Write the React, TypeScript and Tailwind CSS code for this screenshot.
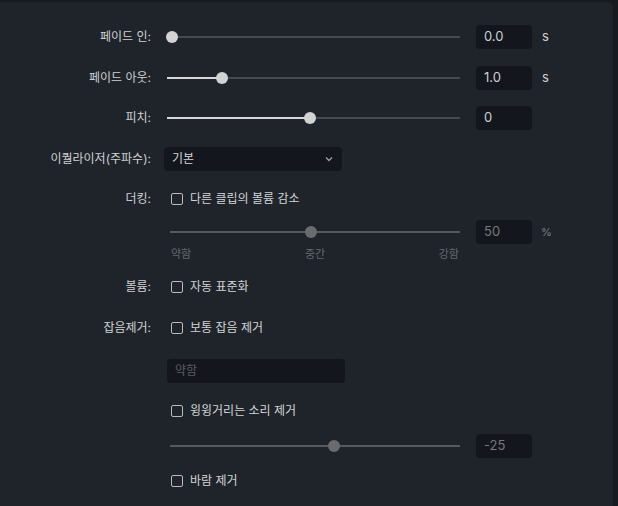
import React from 'react'

const font = { fontFamily: 'Inter, "Noto Sans CJK KR", sans-serif' }

function Label({ children }: { children?: React.ReactNode }) {
    return <div className="w-[151px] shrink-0 text-right text-[12px] text-[#cfd1d3]">{children}</div>
}

function Slider({ width, thumb, fill, disabled }: { width: number; thumb: number; fill?: boolean; disabled?: boolean }) {
    return (
        <div className="relative h-[12px]" style={{ width }}>
            <div className={`absolute left-0 right-0 top-[5px] h-[2px] ${disabled ? 'bg-[#56595d]' : 'bg-[#454a50]'}`} />
            {fill && <div className="absolute left-0 top-[5px] h-[2px] bg-[#d6d6d6]" style={{ width: thumb }} />}
            <div
                className={`absolute top-0 h-[12px] w-[12px] rounded-full ${disabled ? 'bg-[#696b6e]' : 'bg-[#d3d3d3]'}`}
                style={{ left: thumb - 6 }}
            />
        </div>
    )
}

function NumBox({ value, disabled }: { value: string; disabled?: boolean }) {
    return (
        <div
            className={`flex h-[24px] w-[56px] items-center rounded-[4px] bg-[#13171d] pl-[8px] text-[13px] ${
                disabled ? 'text-[#75787c]' : 'text-[#cdd0d3]'
            }`}
        >
            {value}
        </div>
    )
}

function Check({ text }: { text: string }) {
    return (
        <div className="flex items-center gap-[7px] pl-[20px]">
            <div className="h-[12px] w-[12px] rounded-[2px] border border-[#b9bbbd]" />
            <span className="text-[12px] text-[#d2d4d6]">{text}</span>
        </div>
    )
}

export default function App() {
    return (
        <div className="h-[506px] w-[618px] bg-[#171b20] pt-[2px] pr-[5px]" style={font}>
            <div className="h-full rounded-tr-[6px] bg-[#1f242b] pt-[23px]">
                {/* fade in */}
                <div className="flex h-[24px] items-center">
                    <Label>페이드 인:</Label>
                    <div className="ml-[16px]">
                        <Slider width={293} thumb={5} fill />
                    </div>
                    <div className="ml-[16px]"><NumBox value="0.0" /></div>
                    <span className="ml-[10px] text-[13px] text-[#cdd0d3]">s</span>
                </div>

                {/* fade out */}
                <div className="mt-[17px] flex h-[24px] items-center">
                    <Label>페이드 아웃:</Label>
                    <div className="ml-[16px]">
                        <Slider width={293} thumb={55} fill />
                    </div>
                    <div className="ml-[16px]"><NumBox value="1.0" /></div>
                    <span className="ml-[10px] text-[13px] text-[#cdd0d3]">s</span>
                </div>

                {/* pitch */}
                <div className="mt-[16px] flex h-[24px] items-center">
                    <Label>피치:</Label>
                    <div className="ml-[16px]">
                        <Slider width={293} thumb={143} fill />
                    </div>
                    <div className="ml-[16px]"><NumBox value="0" /></div>
                </div>

                {/* equalizer */}
                <div className="mt-[17px] flex h-[24px] items-center">
                    <Label>이퀄라이저(주파수):</Label>
                    <div className="ml-[13px] flex h-[24px] w-[178px] items-center justify-between rounded-[4px] bg-[#13171d] pl-[8px] pr-[8px]">
                        <span className="text-[12px] text-[#d2d4d6]">기본</span>
                        <svg width="10" height="10" viewBox="0 0 10 10" fill="none">
                            <path d="M2 3.5 L5 6.5 L8 3.5" stroke="#9a9da1" strokeWidth="1.4" />
                        </svg>
                    </div>
                </div>

                {/* ducking */}
                <div className="mt-[16px] flex h-[24px] items-center">
                    <Label>더킹:</Label>
                    <Check text="다른 클립의 볼륨 감소" />
                </div>
                <div className="mt-[9px] flex h-[24px] items-center">
                    <Label />
                    <div className="ml-[19px]">
                        <Slider width={290} thumb={141} disabled />
                    </div>
                    <div className="ml-[16px]"><NumBox value="50" disabled /></div>
                    <span className="ml-[9px] text-[11px] text-[#7b7e82]">%</span>
                </div>
                <div className="mt-[2px] flex h-[16px] items-center">
                    <Label />
                    <div className="ml-[20px] flex w-[288px] justify-between text-[11px] text-[#64686c]">
                        <span>약함</span>
                        <span>중간</span>
                        <span>강함</span>
                    </div>
                </div>

                {/* volume */}
                <div className="mt-[13px] flex h-[24px] items-center">
                    <Label>볼륨:</Label>
                    <Check text="자동 표준화" />
                </div>

                {/* noise */}
                <div className="mt-[17px] flex h-[24px] items-center">
                    <Label>잡음제거:</Label>
                    <Check text="보통 잡음 제거" />
                </div>
                <div className="mt-[19px] flex h-[24px] items-center">
                    <Label />
                    <div className="ml-[16px] flex h-[24px] w-[178px] items-center rounded-[4px] bg-[#13171d] pl-[8px] text-[12px] text-[#585c61]">
                        약함
                    </div>
                </div>
                <div className="mt-[16px] flex h-[24px] items-center">
                    <Label />
                    <Check text="윙윙거리는 소리 제거" />
                </div>
                <div className="mt-[11px] flex h-[24px] items-center">
                    <Label />
                    <div className="ml-[19px]">
                        <Slider width={290} thumb={164} disabled />
                    </div>
                    <div className="ml-[16px]"><NumBox value="-25" disabled /></div>
                </div>
                <div className="mt-[11px] flex h-[24px] items-center">
                    <Label />
                    <Check text="바람 제거" />
                </div>
            </div>
        </div>
    )
}
